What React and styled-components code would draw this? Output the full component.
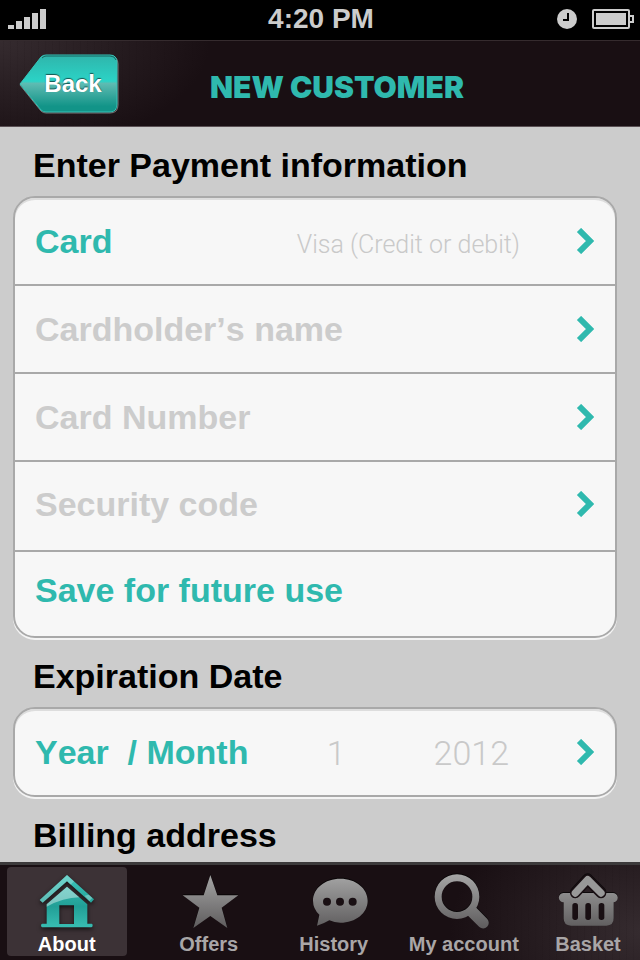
import React from "react";
import styled, { createGlobalStyle, css } from "styled-components";

const teal = "#2fb9ae";
const ink = "#190f13";
const rule = "#a9a9a9";

const GlobalStyle = createGlobalStyle`
  * { box-sizing: border-box; }
  body {
    margin: 0;
    background: #cccccc;
    font-family: "Liberation Sans", Arial, Helvetica, sans-serif;
  }
  button, a { font: inherit; color: inherit; text-decoration: none; }
  h1, h2, ul { margin: 0; padding: 0; }
`;

const Screen = styled.div`
  display: flex;
  flex-direction: column;
  height: 100vh;
`;

const StatusBar = styled.div`
  flex: none;
  display: grid;
  grid-template-columns: 1fr auto 1fr;
  align-items: center;
  height: 40px;
  padding: 0 6px 2px 8px;
  background: #000;
  color: #cccccc;
  font-size: 28px;
  font-weight: bold;
`;

const StatusIcons = styled.div`
  display: flex;
  align-items: center;
  justify-content: flex-end;
  gap: 15px;
`;

const NavBar = styled.header`
  flex: none;
  display: flex;
  align-items: center;
  height: 87px;
  padding-left: 19px;
  border-top: 1px solid #352b2e;
  border-bottom: 1px solid #5a5054;
  background:
    repeating-linear-gradient(90deg, transparent 0 3px, rgba(25, 15, 19, 0.1) 3px 4px, transparent 4px 7px),
    radial-gradient(ellipse 210px 110px at 0 0, #352b2f, ${ink});
`;

const BackButton = styled.button`
  position: relative;
  flex: none;
  width: 100px;
  height: 60px;
  padding: 0 16px 0 24px;
  border: 0;
  background: none;
  color: #fff;
  font-size: 24px;
  font-weight: bold;
  text-shadow: 0 -1px 1px #17544f;
`;

const BackShape = styled.svg`
  position: absolute;
  inset: 0;
  width: 100%;
  height: 100%;
`;

const BackLabel = styled.span`
  position: relative;
`;

const Title = styled.h1`
  flex: 1;
  padding: 6px 85px 0 0;
  color: ${teal};
  font-family: Inter, "Liberation Sans", sans-serif;
  font-size: 30px;
  font-weight: 900;
  line-height: 36px;
  text-align: center;
  white-space: nowrap;
`;

const Content = styled.main`
  flex: 1;
  min-height: 0;
  overflow: hidden;
  padding: 0 23px 0 13px;
`;

const SectionTitle = styled.h2`
  padding: 18px 20px 11px;
  color: #000;
  font-size: 34px;
  line-height: 40px;
`;

const Group = styled.ul`
  overflow: hidden;
  list-style: none;
  border: 2px solid ${rule};
  border-radius: 22px;
  background: #f7f7f7;
  box-shadow: 0 2px 0 #f4f4f4, inset 0 2px 0 #dddddd;
`;

const Item = styled.li`
  & + & { border-top: 2px solid ${rule}; }
`;

const Row = styled.button`
  display: flex;
  align-items: center;
  width: 100%;
  min-height: ${(p) => (p.$tall ? "88px" : "86px")};
  padding: 0 21px 0 20px;
  border: 0;
  background: none;
  color: ${(p) => (p.$empty ? "#cccccc" : teal)};
  font-size: 34px;
  font-weight: bold;
  font-kerning: none;
  line-height: 40px;
  text-align: left;
  white-space: pre;

  ${(p) => p.$tall && css`
    padding-bottom: 4px;
  `}

  ${(p) => p.$plain && css`
    min-height: 84px;
    padding-bottom: 8px;
  `}
`;

const Label = styled.span`
  flex: 1;
`;

const Value = styled.span`
  margin-right: 56px;
  padding-top: 8px;
  color: #c9c9c9;
  font-family: Roboto, "Liberation Sans", sans-serif;
  font-size: 25px;
  font-kerning: normal;
  font-weight: 300;
`;

const DateValue = styled(Value)`
  margin-right: ${(p) => (p.$last ? "67px" : "88px")};
  padding-top: 2px;
  font-size: 34px;
`;

const TabBar = styled.nav`
  flex: none;
  display: grid;
  grid-template-columns: 134fr 151fr 100fr 161fr 86fr;
  height: 98px;
  padding-right: 8px;
  border-top: 3px solid #3c3a3b;
  background:
    repeating-linear-gradient(90deg, transparent 0 3px, rgba(25, 15, 19, 0.1) 3px 4px, transparent 4px 7px),
    radial-gradient(ellipse 190px 130px at 100% 70%, #352b2f, ${ink});
`;

const Tab = styled.a`
  display: flex;
  flex-direction: column;
  align-items: center;
  margin: 2px 0 5px;
  color: #a9a6a7;
  font-size: 20px;
  font-weight: bold;
  line-height: 24px;
  white-space: nowrap;

  ${(p) => p.$active && css`
    margin-right: 7px;
    margin-left: 7px;
    border-radius: 4px;
    background: #3c3236;
    color: #fff;
  `}
`;

const TabIcon = styled.svg`
  flex: none;
  width: 88px;
  height: 58px;
  margin: 4px 0 3px;
  overflow: visible;
  filter: drop-shadow(0 ${(p) => (p.$active ? "2px 2px" : "-1px 0")} #000000aa);
`;

const Signal = () => (
  <svg width="38" height="20" fill="#cccccc" role="img" aria-label="Signal">
    {[4, 8, 12, 16, 20].map((h, i) => (
      <rect key={h} x={i * 8} y={20 - h} width="6" height={h} />
    ))}
  </svg>
);

const Clock = () => (
  <svg width="20" height="20" role="img" aria-label="Alarm">
    <circle cx="10" cy="10" r="10" fill="#cccccc" />
    <path d="M11 4v7H6" fill="none" stroke="#000" strokeWidth="2" />
  </svg>
);

const Battery = () => (
  <svg width="42" height="20" role="img" aria-label="Battery full">
    <rect x="1" y="1" width="36" height="18" rx="1" fill="none" stroke="#cccccc" strokeWidth="2" />
    <rect x="4" y="4" width="30" height="12" fill="#cccccc" />
    <path d="M38 7h3v6h-3" fill="none" stroke="#cccccc" strokeWidth="2" />
  </svg>
);

const Chevron = () => (
  <svg width="18" height="26" viewBox="0 0 18 26" aria-hidden="true">
    <path d="M3 2L14 13L3 24" fill="none" stroke={teal} strokeWidth="6" />
  </svg>
);

const tabs = [
  {
    label: "About",
    box: "69 60 264 174",
    art: (
      <g fill="url(#glow)">
        <path d="M201 72L282 145L273 155L201 91L128 155L119 147Z" />
        <path
          fillRule="evenodd"
          d="M201 107L262 160V218H275Q278 218 278 223Q278 229 274 229H127Q123 229 123 223Q123 218 127 218H140V160ZM178 163V219H222V163Z"
        />
        <path d="M201 107L238 139Q190 140 140 167V160Z" fill="#fff" fillOpacity="0.4" />
        <path d="M201 72L222 91L212 101L201 91L128 155L119 147Z" fill="#fff" fillOpacity="0.25" />
        <path d="M254 134L266 131L277 141L268 150Z" fill="#fff" fillOpacity="0.3" />
      </g>
    ),
  },
  {
    label: "Offers",
    box: "495 60 264 174",
    art: (
      <path
        fill="url(#steel)"
        d="M631 72L652 133H715L665 170L682 231L631 195L580 231L598 170L548 133H611Z"
      />
    ),
  },
  {
    label: "History",
    box: "240 60 264 174",
    art: (
      <>
        <path
          fill="url(#steel)"
          d="M391 83C437 83 473 112 473 149S437 215 391 215Q373 215 358 208Q340 219 321 224L328 191Q309 173 309 149C309 112 345 83 391 83Z"
        />
        <g fill={ink}>
          <circle cx="351" cy="152" r="12" />
          <circle cx="390" cy="152" r="12" />
          <circle cx="428" cy="152" r="12" />
        </g>
      </>
    ),
  },
  {
    label: "My account",
    box: "0 60 264 174",
    art: (
      <g fill="url(#steel)">
        <path
          fillRule="evenodd"
          d="M111 70A67 67 0 1 1 111 204A67 67 0 1 1 111 70ZM111 91A46 46 0 1 0 111 183A46 46 0 1 0 111 91Z"
        />
        <path d="M163 164L202 204A17 17 0 0 1 178 228L141 191Z" />
      </g>
    ),
  },
  {
    label: "Basket",
    box: "368 60 264 174",
    art: (
      <>
        <path
          fill="url(#steel)"
          d="M426 126H573A14 14 0 0 1 577 154V202Q577 224 555 224H449Q427 224 427 202V154A14 14 0 0 1 426 126Z"
        />
        <g fill="none" strokeLinecap="round" strokeLinejoin="round">
          <path d="M462 126L499 86L539 126" stroke={ink} strokeWidth="32" />
          <path d="M462 126L499 86L539 126" stroke="#989898" strokeWidth="22" />
        </g>
        <g fill={ink}>
          <rect x="453" y="156" width="17" height="51" rx="8" />
          <rect x="492" y="156" width="17" height="51" rx="8" />
          <rect x="532" y="156" width="17" height="51" rx="8" />
        </g>
      </>
    ),
  },
];

const Gradients = () => (
  <defs>
    <linearGradient id="glow" gradientUnits="userSpaceOnUse" x1="0" y1="72" x2="0" y2="229">
      <stop offset="0" stopColor="#3fc8bd" />
      <stop offset="0.6" stopColor="#219f96" />
      <stop offset="1" stopColor="#38bdb2" />
    </linearGradient>
    <linearGradient id="steel" gradientUnits="userSpaceOnUse" x1="0" y1="70" x2="0" y2="230">
      <stop offset="0" stopColor="#a6a6a6" />
      <stop offset="1" stopColor="#5f5d5e" />
    </linearGradient>
  </defs>
);

const cardFields = ["Cardholder’s name", "Card Number", "Security code"];

export default function App() {
  return (
    <Screen>
      <GlobalStyle />
      <StatusBar>
        <Signal />
        <span>4:20 PM</span>
        <StatusIcons>
          <Clock />
          <Battery />
        </StatusIcons>
      </StatusBar>
      <NavBar>
        <BackButton type="button">
          <BackShape viewBox="0 0 100 60" preserveAspectRatio="none" aria-hidden="true">
            <defs>
              <linearGradient id="back" x1="0" y1="0" x2="0" y2="1">
                <stop offset="0" stopColor="#2fb5ab" />
                <stop offset="0.46" stopColor="#2bd3c6" />
                <stop offset="0.5" stopColor="#5ebbb2" />
                <stop offset="0.9" stopColor="#129488" />
                <stop offset="1" stopColor="#129488" />
              </linearGradient>
            </defs>
            <path
              d="M1 31L22 4Q24 2 27 2H91Q99 2 99 10V51Q99 59 91 59H27Q24 59 22 57Z"
              fill="none"
              stroke="#7d7678"
              strokeWidth="1"
            />
            <path
              d="M1 30L22 3Q24 1 27 1H91Q98 1 98 9V50Q98 58 91 58H27Q24 58 22 56Z"
              fill="url(#back)"
              stroke="#35c4b8"
              strokeWidth="1"
            />
            <path d="M23 4Q25 2 27 2H91Q96 2 97 6" fill="none" stroke="#17655f" strokeWidth="1" />
          </BackShape>
          <BackLabel>Back</BackLabel>
        </BackButton>
        <Title>NEW CUSTOMER</Title>
      </NavBar>
      <Content>
        <SectionTitle>Enter Payment information</SectionTitle>
        <Group>
          <Item>
            <Row type="button">
              <Label>Card</Label>
              <Value>Visa (Credit or debit)</Value>
              <Chevron />
            </Row>
          </Item>
          {cardFields.map((field, i) => (
            <Item key={field}>
              <Row type="button" $empty $tall={i === cardFields.length - 1}>
                <Label>{field}</Label>
                <Chevron />
              </Row>
            </Item>
          ))}
          <Item>
            <Row type="button" $plain>
              <Label>Save for future use</Label>
            </Row>
          </Item>
        </Group>
        <SectionTitle>Expiration Date</SectionTitle>
        <Group>
          <Item>
            <Row type="button">
              <Label>{"Year  / Month"}</Label>
              <DateValue>1</DateValue>
              <DateValue $last>2012</DateValue>
              <Chevron />
            </Row>
          </Item>
        </Group>
        <SectionTitle>Billing address</SectionTitle>
      </Content>
      <TabBar>
        {tabs.map((tab, i) => (
          <Tab key={tab.label} href="#" $active={i === 0} aria-current={i === 0 ? "page" : undefined}>
            <TabIcon viewBox={tab.box} $active={i === 0} aria-hidden="true">
              {i === 0 && <Gradients />}
              {tab.art}
            </TabIcon>
            {tab.label}
          </Tab>
        ))}
      </TabBar>
    </Screen>
  );
}
